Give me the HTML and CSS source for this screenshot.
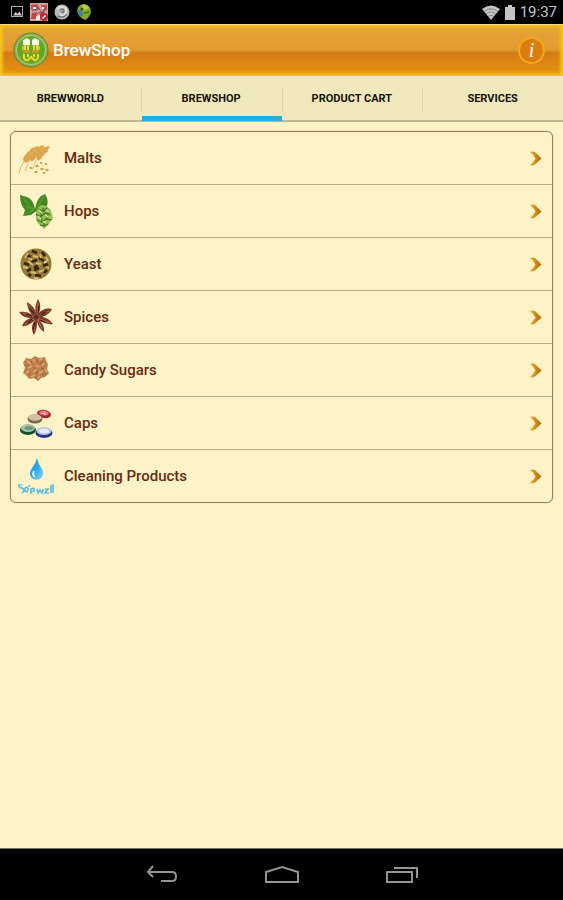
FILE: index.html
```html
<!DOCTYPE html>
<html lang="en">
<head>
  <meta charset="UTF-8">
  <meta name="viewport" content="width=device-width, initial-scale=1.0">
  <title>BrewShop</title>
  <link rel="stylesheet" href="styles.css">
</head>
<body>
  <svg class="defs" width="0" height="0" aria-hidden="true">
    <defs>
      <linearGradient id="gold" x1="0" y1="0" x2="1" y2="0">
        <stop offset="0" stop-color="#e9b32e"/>
        <stop offset="1" stop-color="#b56200"/>
      </linearGradient>
      <linearGradient id="water" x1="0" y1="0" x2="1" y2="1">
        <stop offset="0" stop-color="#1b8fd6"/>
        <stop offset="0.5" stop-color="#2ba8ea"/>
        <stop offset="1" stop-color="#8fdcf8"/>
      </linearGradient>
    </defs>
    <symbol id="chevron" viewBox="0 0 13 15">
      <path fill="url(#gold)" d="M1 1Q4 0 6 1L12.500 7.500L6 13.500Q3 15 1 14Q4 12 6.500 7.500Q4 3 1 1Z"/>
    </symbol>
    <symbol id="ear" viewBox="0 0 24 30">
      <path d="M2 29Q6 15 19 4" fill="none" stroke="#d9b264" stroke-width="1"/>
      <g fill="#d9a044" stroke="#e3b769" stroke-width="0.6">
        <ellipse cx="20" cy="3" rx="3.600" ry="1.800" transform="rotate(-40 20 3)"/>
        <ellipse cx="16" cy="5" rx="3.600" ry="1.800" transform="rotate(-60 16 5)"/>
        <ellipse cx="18" cy="7" rx="3.600" ry="1.800" transform="rotate(-30 18 7)"/>
        <ellipse cx="12" cy="9" rx="3.600" ry="1.800" transform="rotate(-65 12 9)"/>
        <ellipse cx="14" cy="11" rx="3.600" ry="1.800" transform="rotate(-36 14 11)"/>
        <ellipse cx="9" cy="13" rx="3.600" ry="1.800" transform="rotate(-70 9 13)"/>
        <ellipse cx="11" cy="15" rx="3.600" ry="1.800" transform="rotate(-45 11 15)"/>
      </g>
    </symbol>
  </svg>

  <div class="status-bar">
    <div class="notices">
      <svg width="14" height="14" viewBox="0 0 14 14">
        <rect x="1.5" y="1.5" width="11" height="10" fill="none" stroke="#aaa"/>
        <path fill="#ccc" d="M3 10.5L5.5 7L7.5 9L9.5 6.5L12 10.5Z"/>
      </svg>
      <svg width="18" height="18" viewBox="0 0 18 18">
        <rect width="18" height="18" fill="#c9a5a0"/>
        <path fill="#c4484c" d="M1 2L7 1L10 6L5 8L1 6ZM11 2H17V7L13 8ZM2 10L7 9L6 16H1ZM9 9L14 8L16 12L10 13Z"/>
        <path stroke="#667" fill="none" d="M2 8L8 4L12 10L17 6M5 13L9 9"/>
        <path fill="#eee" d="M3 4H6V6H3ZM12 4H14V6H12ZM6 14L10 12V17H6Z"/>
        <circle cx="14" cy="14" r="4" fill="#c5262e"/>
        <path fill="#fff" d="M12 15L15 12L16 13L13 16Z"/>
      </svg>
      <svg width="16" height="16" viewBox="0 0 16 16">
        <circle cx="8" cy="8" r="7.5" fill="#b6b6b6"/>
        <path d="M3 5Q7 1 11 4Q14 8 10 11Q7 12 6 9" fill="none" stroke="#dedede" stroke-width="2"/>
        <path d="M6 6Q10 4 10 7Q9 9 7 8M4 12Q9 15 13 10" fill="none" stroke="#666" stroke-width="1.2"/>
      </svg>
      <svg width="16" height="18" viewBox="0 0 16 18">
        <path fill="#7fa728" d="M8 1Q15 2 15 9Q14 14 9 17Q2 14 1 8Q2 1 8 1Z"/>
        <path fill="#b7cc45" d="M6 2Q11 1 13 5L9 7L5 6Z"/>
        <path fill="#3b7ea0" d="M1 8L5 7L7 12L4 14Z"/>
        <circle cx="6" cy="6" r="1.5" fill="#35561a"/>
        <path stroke="#3f7220" stroke-width="1.5" d="M8 10L13 9"/>
      </svg>
    </div>
    <div class="system">
      <svg width="18" height="15" viewBox="0 0 18 15">
        <path fill="#c4c4c4" d="M0 4Q9 -3 18 4L9 15Z"/>
        <path d="M2 6.5Q9 1 16 6.5M4 9Q9 5 14 9M6 11.5Q9 9 12 11.5" fill="none" stroke="#777" stroke-width="0.8"/>
      </svg>
      <svg width="10" height="15" viewBox="0 0 10 15">
        <path fill="#c4c4c4" d="M3 0H7V2H10V15H0V2H3Z"/>
      </svg>
      <span class="clock">19:37</span>
    </div>
  </div>

  <header class="app-bar">
    <svg class="logo" width="36" height="36" viewBox="0 0 36 36">
      <circle cx="18" cy="18" r="17" fill="#8fb15c" stroke="#5d8527"/>
      <circle cx="18" cy="18" r="14.5" fill="#62a824" stroke="#b3c97c"/>
      <path d="M12 13V19M15 13V19M21 13V19M24 13V19" stroke="#f0d62c" stroke-width="2"/>
      <path d="M10 14V18M26 14V18" stroke="#c9d84c" stroke-width="1.5"/>
      <path fill="#c79a1c" d="M10 18H17V21H10ZM19 18H26V21H19Z"/>
      <path d="M11 22V26Q12 29 15 28L18 25L21 28Q24 29 25 26V22M15 22V25M21 22V25" fill="none" stroke="#f3dc28" stroke-width="2"/>
      <path fill="#f8fbe9" d="M10 11Q9 8 12 7Q14 5 17 8V13H10ZM19 13V8Q22 5 24 7Q27 8 26 11V13Z"/>
    </svg>
    <h1>BrewShop</h1>
    <button class="info" type="button" aria-label="Information">i</button>
  </header>

  <nav class="tabs">
    <a href="#brewworld">BREWWORLD</a>
    <a href="#brewshop" class="active">BREWSHOP</a>
    <a href="#cart">PRODUCT CART</a>
    <a href="#services">SERVICES</a>
  </nav>

  <main>
    <ul class="categories">
      <li><a href="#malts">
        <svg class="thumb" viewBox="0 0 38 38">
          <use href="#ear" x="0" y="7" width="22" height="28"/>
          <use href="#ear" x="6" y="6" width="22" height="27"/>
          <use href="#ear" x="12" y="7" width="23" height="24"/>
          <g fill="#d29a3d">
            <ellipse cx="14" cy="29" rx="1.7" ry="1"/>
            <ellipse cx="20" cy="27" rx="1.7" ry="1.2"/>
            <ellipse cx="25" cy="30" rx="1.7" ry="1.2"/>
            <ellipse cx="29" cy="25" rx="1.4" ry="1"/>
            <ellipse cx="30" cy="31" rx="1.6" ry="1.2"/>
            <ellipse cx="19" cy="33" rx="1.7" ry="1"/>
            <ellipse cx="27" cy="34" rx="1.5" ry="1"/>
            <ellipse cx="24" cy="24" rx="1.2" ry="1"/>
          </g>
        </svg>
        <span>Malts</span>
        <svg class="chevron"><use href="#chevron"/></svg>
      </a></li>
      <li><a href="#hops">
        <svg class="thumb" viewBox="0 0 38 38">
          <path fill="#438a20" d="M3 3L10 5Q15 7 17 13L18 17Q20 7 24 4L28 2Q32 8 30 14L24 18L18 20L14 23L6 24L8 18Q3 13 3 3Z"/>
          <path d="M5 5L17 18L8 22M27 4L19 18M17 18L9 14" fill="none" stroke="#62a038"/>
          <path fill="#97bd55" d="M24 13Q31 13 34 19L36 26Q34 29 32 32L27 37L23 33Q18 30 19 23Q19 16 24 13Z"/>
          <path d="M22 17L26 20L30 16M19 22L24 25L28 21L33 23M20 28L25 30L29 27L35 28M23 33L27 34L31 32M26 16V20M24 21V25M31 19V23M25 26V30M30 24V28M27 31V34" fill="none" stroke="#3f741d" stroke-width="1.1"/>
          <path d="M22 18L25 21M29 18L32 20M21 24L24 27M28 23L31 25M26 29L29 31" stroke="#dce9a5" stroke-width="1.1"/>
        </svg>
        <span>Hops</span>
        <svg class="chevron"><use href="#chevron"/></svg>
      </a></li>
      <li><a href="#yeast">
        <svg class="thumb" viewBox="0 0 38 38">
          <circle cx="19" cy="19" r="15.5" fill="#987a38"/>
          <path d="M9 10L14 12M15 6L20 8M25 7L28 11M7 18L12 20M14 17L20 15M22 13L27 16M10 26L14 24M17 22L22 24M26 21L31 19M18 30L24 31M27 28L30 25M14 31L11 29M20 20L18 26" fill="none" stroke="#30240e" stroke-width="2.6"/>
          <path d="M11 8L8 13M16 11L21 12M23 9L24 13M29 12L31 16M6 22L11 23M11 16L16 20M19 18L24 19M14 27L19 28M22 27L27 25M29 22L32 23M17 33L22 34M12 13L15 15M27 17L30 17" fill="none" stroke="#d8bd72" stroke-width="1.8"/>
        </svg>
        <span>Yeast</span>
        <svg class="chevron"><use href="#chevron"/></svg>
      </a></li>
      <li><a href="#spices">
        <svg class="thumb" viewBox="0 0 38 38">
          <path fill="#7b3b2b" d="M19 15Q17 9 21 1Q25 8 22 15Q27 9 35 11Q32 17 25 19Q32 20 36 26Q29 27 23 23Q28 28 27 34Q22 31 20 24Q20 32 17 37Q13 30 17 23Q10 29 5 28Q7 22 14 20Q6 20 2 14Q10 13 15 17Q10 11 10 4Q17 8 19 15Z"/>
          <path d="M20 18L21 5M20 19L32 13M20 20L33 25M20 20L25 31M18 20L17 33M18 20L8 26M18 19L6 15M18 18L12 7" stroke="#b07459" stroke-width="1"/>
          <path d="M22 8L21 15M29 14L24 17M28 24L23 22M16 32L18 24M11 25L15 21M9 16L15 18M13 10L17 16" stroke="#421a13" stroke-width="1.1"/>
          <circle cx="19" cy="19" r="2.5" fill="#593022"/>
        </svg>
        <span>Spices</span>
        <svg class="chevron"><use href="#chevron"/></svg>
      </a></li>
      <li><a href="#candy-sugars">
        <svg class="thumb" viewBox="0 0 38 38">
          <path fill="#bd7f4c" d="M9 7L14 8L18 5L22 7L28 6L29 10L31 13L30 18L32 22L28 26L24 27L21 30L17 27L12 28L9 24L6 22L8 17L6 12Z"/>
          <path d="M10 10L13 12M16 8L18 11M22 9L25 8M27 12L25 15M19 14L22 16M11 17L15 15M9 22L12 20M16 21L19 19M22 22L26 20M28 18L30 21M14 26L18 24M21 27L23 25M13 12L15 13" stroke="#dba976" stroke-width="1.6"/>
          <path d="M14 10L15 13M20 9L21 12M23 13L27 10M9 14L12 15M16 17L18 17M24 18L27 17M11 24L14 22M19 23L21 20M25 24L28 22M18 27L20 26" stroke="#985f36" stroke-width="1"/>
        </svg>
        <span>Candy Sugars</span>
        <svg class="chevron"><use href="#chevron"/></svg>
      </a></li>
      <li><a href="#caps">
        <svg class="thumb" viewBox="0 0 38 38">
          <ellipse cx="27" cy="10" rx="7" ry="4" fill="#a91f32" transform="rotate(10 27 10)"/>
          <ellipse cx="27" cy="9" rx="5" ry="2.4" fill="#e56b76" transform="rotate(10 27 9)"/>
          <path d="M24 9L29 10M27 7L28 11" stroke="#f6c6c8"/>
          <ellipse cx="18" cy="15" rx="7.5" ry="4.5" fill="#756951"/>
          <ellipse cx="18" cy="13.5" rx="6.5" ry="3.3" fill="#d3c3a4"/>
          <ellipse cx="11" cy="26" rx="8" ry="5" fill="#174e2d"/>
          <ellipse cx="11" cy="24" rx="7" ry="4" fill="#a7c3ac"/>
          <ellipse cx="12" cy="24" rx="4.5" ry="2" fill="#6a9a79"/>
          <ellipse cx="27" cy="29" rx="8.5" ry="5" fill="#24358f"/>
          <ellipse cx="27" cy="27" rx="7.5" ry="4" fill="#bdc5ea"/>
          <ellipse cx="27" cy="27" rx="5" ry="2.2" fill="#e9ebf6"/>
        </svg>
        <span>Caps</span>
        <svg class="chevron"><use href="#chevron"/></svg>
      </a></li>
      <li><a href="#cleaning">
        <svg class="thumb" viewBox="0 0 38 38">
          <path fill="url(#water)" d="M20 1Q21 7 25 12Q28 19 23 22Q19 24 15 21Q11 17 15 11Q19 6 20 1Z"/>
          <path d="M17 14Q15 18 18 20" fill="none" stroke="#e5f8ff" stroke-width="1.8"/>
          <path d="M2 27Q1 31 5 31Q9 34 5 36M9 30Q6 34 10 35Q13 31 9 30M14 31V37M14 32Q18 30 17 34L14 35M20 32L21 36L23 33L25 36L26 32M28 32H31L28 36H32M34 28V36M36 27V36" fill="none" stroke="#58bce8" stroke-width="1.6"/>
          <circle cx="4" cy="28" r="1.5" fill="#91d8f3"/>
          <circle cx="12" cy="29" r="1" fill="#58bce8"/>
        </svg>
        <span>Cleaning Products</span>
        <svg class="chevron"><use href="#chevron"/></svg>
      </a></li>
    </ul>
  </main>

  <footer class="nav-bar">
    <button type="button" aria-label="Back">
      <svg width="32" height="20" viewBox="0 0 32 20">
        <path d="M7 1L2 7L7 12M2 7H26Q30 7 30 11.5Q30 16 26 16H15"/>
      </svg>
    </button>
    <button type="button" aria-label="Home">
      <svg width="36" height="20" viewBox="0 0 36 20">
        <path d="M2 17V7L18 2L34 7V17Z"/>
      </svg>
    </button>
    <button type="button" aria-label="Recent apps">
      <svg width="32" height="20" viewBox="0 0 32 20">
        <path d="M1 7H26V17H1ZM8 3H31V13"/>
      </svg>
    </button>
  </footer>
</body>
</html>
```

FILE: styles.css
```css
* {
  box-sizing: border-box;
}
body {
  display: flex;
  flex-direction: column;
  min-height: 100vh;
  margin: 0;
  font-family: Roboto, "Liberation Sans", sans-serif;
  background-color: #fdf3c7;
}
svg {
  display: block;
  flex: none;
}
button {
  padding: 0;
  border: none;
  background: none;
  cursor: pointer;
}
.defs {
  position: absolute;
}

/* status bar */
.status-bar {
  display: flex;
  justify-content: space-between;
  align-items: center;
  height: 24px;
  padding: 0 6px 0 10px;
  background-color: #000;
}
.notices,
.system {
  display: flex;
  align-items: center;
}
.notices {
  gap: 6px;
}
.system {
  gap: 5px;
}
.clock {
  font-size: 15px;
  color: #c4c4c4;
}

/* header */
.app-bar {
  display: flex;
  align-items: center;
  height: 52px;
  padding: 0 17px 0 12px;
  gap: 4px;
  background: linear-gradient(#e6a63b, #e2992e 50%, #d47b17 56%, #e6950f);
  border: 1px solid #f4c521;
  border-top-color: #f7dc82;
  box-shadow: inset 0 0 3px 2px #f5bd1b;
}
.app-bar h1 {
  flex: 1;
  margin: 0;
  font-size: 17px;
  font-weight: 500;
  color: #fff;
}
.info {
  width: 27px;
  height: 27px;
  border: 2px solid #f2ab16;
  border-radius: 50%;
  background-color: #dc7c13;
  font-family: "Liberation Serif", serif;
  font-size: 20px;
  font-style: italic;
  line-height: 20px;
  color: #fff;
}

/* tabs */
.tabs {
  display: flex;
  height: 46px;
  background-color: #f1e9bd;
  border-bottom: 2px solid #bdb594;
}
.tabs a {
  position: relative;
  flex: 1;
  font-size: 11px;
  font-weight: 700;
  line-height: 46px;
  text-align: center;
  text-decoration: none;
  color: #17140c;
}
.tabs a + a::before {
  content: "";
  position: absolute;
  left: 0;
  top: 12px;
  height: 24px;
  border-left: 1px solid #ddd6ae;
}
.tabs .active::after {
  content: "";
  position: absolute;
  left: 1px;
  right: 0;
  bottom: -1px;
  height: 5px;
  background-color: #22afdc;
}

/* category list */
main {
  flex: 1;
  padding: 9px 10px;
}
.categories {
  margin: 0;
  padding: 0;
  list-style: none;
  border: 1px solid #96805f;
  border-radius: 6px;
  box-shadow: 0 0 1px #96805f;
}
.categories li + li {
  border-top: 1px solid #b7ab85;
}
.categories a {
  display: flex;
  align-items: center;
  height: 52px;
  padding: 0 10px 0 6px;
  gap: 9px;
  font-size: 15px;
  font-weight: 500;
  text-decoration: none;
  color: #682b12;
}
.categories span {
  flex: 1;
}
.thumb {
  width: 38px;
  height: 38px;
}
.chevron {
  width: 13px;
  height: 15px;
}

/* navigation bar */
.nav-bar {
  display: flex;
  justify-content: center;
  align-items: center;
  gap: 86px;
  height: 52px;
  background-color: #000;
  border-top: 1px solid #777258;
}
.nav-bar path {
  fill: none;
  stroke: #949494;
  stroke-width: 2;
}
```
